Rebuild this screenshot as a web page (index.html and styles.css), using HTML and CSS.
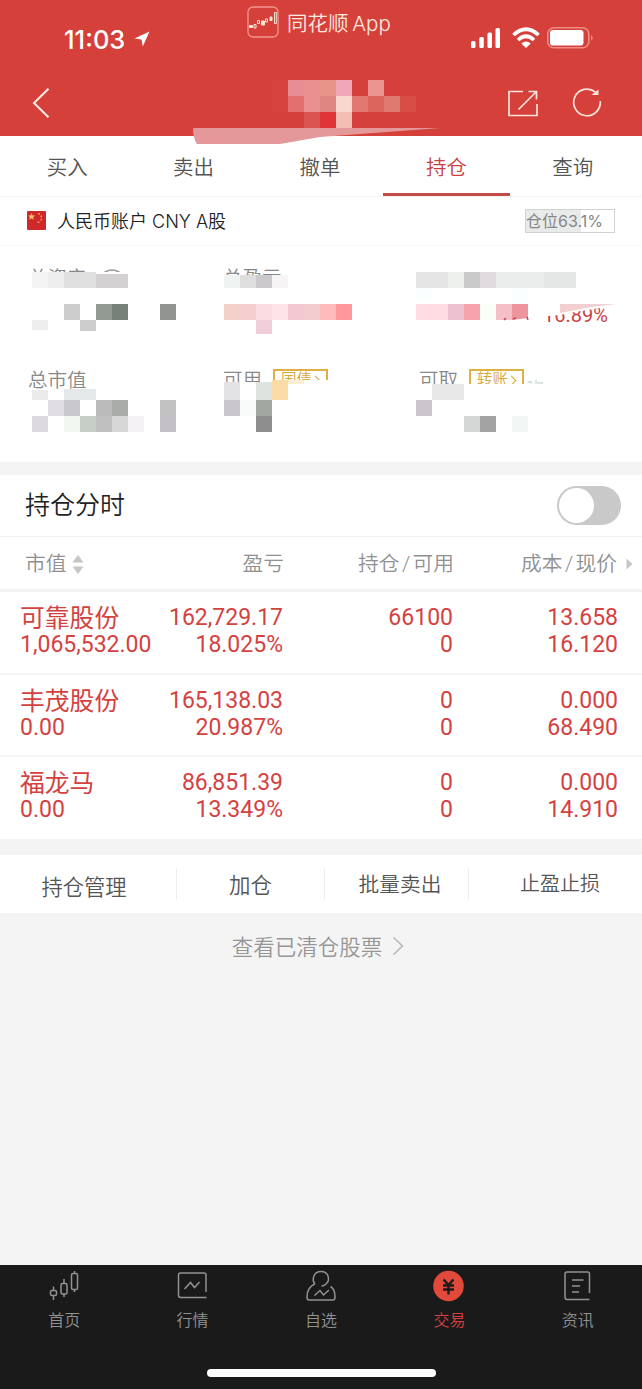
FILE: index.html
```
<!DOCTYPE html>
<html lang="zh-CN">
<head>
  <meta charset="UTF-8" />
  <title>持仓</title>
  <link rel="stylesheet" href="styles.css">
</head>
<body>
  <header class="header">
    <div class="status-bar">
      <div class="clock">11:03
        <svg width="16" height="16" viewBox="0 0 16 16"><path d="M15.5 0.5L0.5 7.5L7.5 8.5L8.8 15.5Z" fill="#fff"/></svg>
      </div>
      <div class="brand">
        <svg width="32" height="32" viewBox="0 0 32 32" fill="none" stroke="#ffe3d3">
          <rect x="1" y="1" width="30" height="30" rx="5" stroke="#f3968e" stroke-width="1.3"/>
          <path d="M2.5 19.500h3v2h-3zM14.500 15h3v4h-3zM23 11h2v3.500h-2z" fill="#ffe3d3"/>
          <path d="M7 18.500h2v3.500H7zM10.500 14.500h2v3h-2zM18.500 13h2v3h-2zM27.500 6.500h1.800v11h-1.800z"/>
        </svg>
        <span>同花顺 App</span>
      </div>
      <div class="signals">
        <svg width="30" height="22" viewBox="0 0 30 22" fill="#fff">
          <rect x="0" y="14" width="4.500" height="7" rx="1.500"/><rect x="8.300" y="10" width="4.500" height="11" rx="1.500"/>
          <rect x="16.500" y="5.500" width="4.500" height="15.500" rx="1.500"/><rect x="24.500" y="1" width="4.500" height="20" rx="1.500"/>
        </svg>
        <svg class="wifi" width="28" height="22" viewBox="0 0 28 22" fill="none" stroke="#fff" stroke-width="3.700">
          <path d="M1.500 8Q14 -3.500 26.500 8M6 13Q14 5.500 22 13"/><path d="M9.300 16.500Q14 12.500 18.700 16.500L14 21Z" fill="#fff" stroke="none"/>
        </svg>
        <svg class="battery" width="47" height="22" viewBox="0 0 47 22">
          <rect x="0.800" y="0.800" width="41" height="20" rx="6" fill="none" stroke="#f08b86" stroke-width="1.600"/>
          <rect x="3" y="3" width="33.500" height="15.500" rx="3" fill="#fff"/><path d="M44 8Q47.500 10.500 44 14Z" fill="#f08b86"/>
        </svg>
      </div>
    </div>
    <div class="title-bar">
      <svg class="back" width="18" height="30" viewBox="0 0 18 30" fill="none" stroke="#ffede6" stroke-width="2"><path d="M16.500 0.800L2 15L16.500 29.200"/></svg>
      <svg class="share" width="30" height="27" viewBox="0 0 30 27" fill="none" stroke="#ffe3d8" stroke-width="1.700"><path d="M15 1.500H1V25.500H29V14M10.500 19.500L28 2M20.500 1.500H28.500V9.500"/></svg>
      <svg width="30" height="30" viewBox="0 0 30 30" fill="none" stroke="#ffe3d8" stroke-width="1.700"><path d="M23.500 4.200A13.300 13.300 0 1 0 28.200 13"/><path d="M19.500 7H26.500V1.500Z" fill="#ffe3d8" stroke="none"/></svg>
    </div>
    <svg class="title-mask" width="250" height="66" viewBox="190 79 250 66">
      <path d="M282 81h2v2h-2zM289 80h14v1h-14z" fill="#ffd9cf"/>
      <g>
        <rect x="272" y="80" width="16" height="32" fill="#d6453d"/>
        <rect x="288" y="80" width="16" height="16" fill="#e88e92"/>
        <rect x="288" y="96" width="16" height="16" fill="#e1706f"/>
        <rect x="304" y="80" width="16" height="32" fill="#ea9090"/>
        <rect x="320" y="80" width="16" height="16" fill="#e79589"/>
        <rect x="320" y="96" width="16" height="16" fill="#df8580"/>
        <rect x="336" y="80" width="16" height="16" fill="#f2a7b8"/>
        <rect x="368" y="80" width="16" height="16" fill="#eb958e"/>
        <rect x="336" y="96" width="16" height="16" fill="#f8d7cf"/>
        <rect x="352" y="96" width="16" height="16" fill="#e17770"/>
        <rect x="368" y="96" width="16" height="16" fill="#dd655d"/>
        <rect x="384" y="96" width="16" height="16" fill="#df7a71"/>
        <rect x="400" y="96" width="16" height="16" fill="#d84d45"/>
        <rect x="304" y="112" width="16" height="16" fill="#dc5451"/>
        <rect x="320" y="112" width="16" height="16" fill="#df3538"/>
        <rect x="336" y="112" width="16" height="16" fill="#f2bdb3"/>
      </g>
      <path d="M193 128H440L400 131L320 137L280 144H197Q193 138 193 128Z" fill="#e5989a"/>
    </svg>
  </header>

  <nav class="tabs">
    <a>买入</a>
    <a>卖出</a>
    <a>撤单</a>
    <a class="active">持仓</a>
    <a>查询</a>
  </nav>

  <div class="account">
    <svg width="19" height="19" viewBox="0 0 19 19">
      <rect width="19" height="19" rx="1" fill="#cf282b"/>
      <path d="M4.500 2l1 2.500h2.600l-2 1.700.8 2.600-2.400-1.600-2.300 1.600.8-2.600-2-1.700h2.600z" fill="#ffc36b"/>
      <path d="M11 2h2v1.500h-2zM13.500 4.500h1.500v2h-1.500zM13.500 8h1.500v1.500h-1.500zM10.500 10.500h2v1.500h-2z" fill="#f2945b"/>
    </svg>
    <span class="account-name">人民币账户 CNY A股</span>
    <span class="position">仓位63.1%</span>
  </div>

  <section class="summary">
    <div class="cell">总资产
      <svg class="eye" width="30" height="18" viewBox="0 0 30 18" fill="none" stroke="#999" stroke-width="1.500"><path d="M1 9Q15 -7 29 9Q15 25 1 9Z"/><circle cx="15" cy="9" r="5.500"/></svg>
    </div>
    <div class="cell">总盈亏</div>
    <div class="cell percent">16.89%</div>
    <div class="cell">总市值</div>
    <div class="cell">可用 <span class="badge">国债<i></i></span></div>
    <div class="cell">可取 <span class="badge">转账<i></i></span></div>
    <svg class="mosaic" width="642" height="217" viewBox="0 245 642 217">
      <g fill="#fff">
        <rect x="26" y="272" width="110" height="20"/>
        <rect x="220" y="275" width="70" height="16"/>
        <path d="M535 300H620V305L600 308L575 312L560 315L535 317Z"/>
        <rect x="220" y="382" width="44" height="12"/>
        <rect x="264" y="380" width="70" height="14"/>
        <rect x="416" y="384" width="112" height="10"/>
      </g>
      <rect x="32" y="272" width="16" height="16" fill="#f4f4f4"/>
      <rect x="48" y="272" width="16" height="16" fill="#eee"/>
      <rect x="64" y="272" width="32" height="16" fill="#e1e0e1"/>
      <rect x="96" y="274" width="32" height="14" fill="#d3d1d2"/>
      <rect x="64" y="304" width="16" height="16" fill="#ccc"/>
      <rect x="96" y="304" width="16" height="16" fill="#929b93"/>
      <rect x="112" y="304" width="16" height="16" fill="#788178"/>
      <rect x="160" y="304" width="16" height="16" fill="#929492"/>
      <rect x="32" y="320" width="16" height="10" fill="#eee"/>
      <rect x="80" y="320" width="16" height="11" fill="#ccc"/>

      <rect x="224" y="275" width="16" height="13" fill="#eff4f3"/>
      <rect x="240" y="275" width="16" height="13" fill="#dedede"/>
      <rect x="256" y="275" width="16" height="13" fill="#cbc9cb"/>
      <rect x="272" y="275" width="16" height="13" fill="#f7f4f6"/>
      <rect x="224" y="304" width="16" height="16" fill="#f2d1cb"/>
      <rect x="240" y="304" width="16" height="16" fill="#f5cfd0"/>
      <rect x="256" y="304" width="16" height="16" fill="#fbdce1"/>
      <rect x="272" y="304" width="16" height="16" fill="#fde4e8"/>
      <rect x="288" y="304" width="16" height="16" fill="#f4c8d2"/>
      <rect x="304" y="304" width="16" height="16" fill="#f2cccf"/>
      <rect x="320" y="304" width="16" height="16" fill="#ffbaba"/>
      <rect x="336" y="304" width="16" height="16" fill="#ff989d"/>
      <rect x="256" y="320" width="16" height="14" fill="#f0ceda"/>

      <rect x="416" y="272" width="32" height="16" fill="#e5e5e5"/>
      <rect x="448" y="272" width="16" height="16" fill="#edf0ed"/>
      <rect x="464" y="272" width="16" height="16" fill="#cacaca"/>
      <rect x="480" y="272" width="16" height="16" fill="#dfdbde"/>
      <rect x="496" y="272" width="48" height="16" fill="#eaedec"/>
      <rect x="544" y="272" width="32" height="16" fill="#e4e7e6"/>
      <path d="M416 289h16v11h-16zM512 289h16v15h-16z" fill="#f9fefe"/>
      <rect x="416" y="304" width="32" height="16" fill="#ffdde3"/>
      <rect x="448" y="304" width="16" height="16" fill="#edc1cf"/>
      <rect x="464" y="304" width="16" height="16" fill="#f7a3ae"/>
      <rect x="480" y="304" width="16" height="16" fill="#fafff5"/>
      <rect x="496" y="304" width="16" height="16" fill="#f5bfc7"/>
      <path d="M512 304h16v14l-16 2z" fill="#ed949c"/>
      <path d="M560 304H616L592 307L576 310L560 313Z" fill="#f2d0d1"/>
      <path d="M504 320l2-2M513 319l3-1M527 317l1 3" stroke="#cf4246" stroke-width="1.500"/>

      <rect x="32" y="390" width="16" height="10" fill="#ebebec"/>
      <rect x="64" y="389" width="32" height="11" fill="#e5e8e8"/>
      <rect x="48" y="400" width="16" height="16" fill="#e0dee2"/>
      <rect x="64" y="400" width="16" height="16" fill="#c8c8ce"/>
      <rect x="96" y="400" width="16" height="16" fill="#bbb"/>
      <rect x="112" y="400" width="16" height="16" fill="#a9aca9"/>
      <rect x="160" y="400" width="16" height="16" fill="#c2c2c3"/>
      <rect x="32" y="416" width="16" height="16" fill="#dcdade"/>
      <rect x="64" y="416" width="16" height="16" fill="#f2f7f2"/>
      <rect x="80" y="416" width="16" height="16" fill="#c5cfc5"/>
      <rect x="96" y="416" width="16" height="16" fill="#c0c0c0"/>
      <rect x="112" y="416" width="16" height="16" fill="#d7d7d7"/>
      <rect x="128" y="416" width="16" height="16" fill="#f4f2f4"/>
      <rect x="160" y="416" width="16" height="16" fill="#c3c1c5"/>

      <rect x="224" y="382" width="16" height="18" fill="#e3e2e5"/>
      <rect x="256" y="382" width="16" height="18" fill="#dde4df"/>
      <rect x="272" y="380" width="16" height="20" fill="#fbdca5"/>
      <rect x="288" y="380" width="16" height="4" fill="#f8eed3"/>
      <rect x="224" y="400" width="16" height="16" fill="#c9c7cc"/>
      <rect x="240" y="400" width="16" height="16" fill="#f7faf8"/>
      <rect x="256" y="400" width="16" height="16" fill="#a0a8a1"/>
      <rect x="256" y="416" width="16" height="16" fill="#8e8e8e"/>

      <rect x="432" y="384" width="32" height="16" fill="#e8e8e8"/>
      <rect x="416" y="400" width="16" height="16" fill="#cac6cc"/>
      <rect x="464" y="416" width="16" height="16" fill="#d3d6d5"/>
      <rect x="480" y="416" width="16" height="16" fill="#a3a3a3"/>
      <rect x="512" y="416" width="16" height="16" fill="#f2f6f5"/>
      <path d="M527 383l1-2h4v2h3l1-5 1 4h6v2z" fill="#d8dfdd"/>
    </svg>
  </section>

  <div class="timeline">
    <span>持仓分时</span>
    <div class="toggle"></div>
  </div>

  <section class="holdings">
    <div class="row head">
      <div>市值<svg class="sort" width="12" height="19" viewBox="0 0 12 19" fill="#c6c6c6"><path d="M6 0L11.500 7.500H0.500ZM0.500 11.500H11.500L6 19Z"/></svg></div>
      <div>盈亏</div>
      <div>持仓<b>/</b>可用</div>
      <div>成本<b>/</b>现价<svg class="more" width="7" height="12" viewBox="0 0 7 12" fill="#c6c6c6"><path d="M0.500 0.500L6.500 6L0.500 11.500Z"/></svg></div>
    </div>
    <div class="row">
      <div><span class="name">可靠股份</span><span>1,065,532.00</span></div>
      <div><span>162,729.17</span><span>18.025%</span></div>
      <div><span>66100</span><span>0</span></div>
      <div><span>13.658</span><span>16.120</span></div>
    </div>
    <div class="row">
      <div><span class="name">丰茂股份</span><span>0.00</span></div>
      <div><span>165,138.03</span><span>20.987%</span></div>
      <div><span>0</span><span>0</span></div>
      <div><span>0.000</span><span>68.490</span></div>
    </div>
    <div class="row">
      <div><span class="name">福龙马</span><span>0.00</span></div>
      <div><span>86,851.39</span><span>13.349%</span></div>
      <div><span>0</span><span>0</span></div>
      <div><span>0.000</span><span>14.910</span></div>
    </div>
  </section>

  <div class="actions">
    <a class="manage">持仓管理</a>
    <a class="add">加仓</a>
    <a>批量卖出</a>
    <a class="stop">止盈止损</a>
  </div>

  <div class="closed">查看已清仓股票
    <svg width="12" height="20" viewBox="0 0 12 20" fill="none" stroke="#b5b5b5" stroke-width="1.500"><path d="M1.500 1.500L10.500 10L1.500 18.500"/></svg>
  </div>

  <footer class="bottom-nav">
    <a>
      <svg width="32" height="32" viewBox="0 0 32 32" fill="none" stroke="#929292" stroke-width="1.500"><rect x="2.500" y="20.500" width="6" height="5" rx="1.500"/><rect x="13" y="13.500" width="6" height="10.500" rx="1.500"/><rect x="23.500" y="3.500" width="6" height="16" rx="1.500"/><path d="M5.500 16.500v4M5.500 25.500v4.500M16 9v4.500M16 24v3M26.500 1v2.500M26.500 19.500v2.500"/></svg>
      首页
    </a>
    <a>
      <svg width="32" height="32" viewBox="0 0 32 32" fill="none" stroke="#929292" stroke-width="1.500"><path d="M29 22V5Q29 3 27 3H3.500Q1.500 3 1.500 5V25Q1.500 27.500 3.500 27.500H29.500M7.500 19L13.500 12.500L17.500 17.500L22.500 12"/></svg>
      行情
    </a>
    <a>
      <svg width="32" height="32" viewBox="0 0 32 32" fill="none" stroke="#929292" stroke-width="1.500"><path d="M10 14C7 11 7.500 1.500 16 1.500S25 11 21 14Q19 16 16.500 16M10 14Q2 17 2 27Q2 30 4 30H28Q30 30 30 27Q30 19 25.500 16.500M9.500 25.500L15 20.500L18.500 25L24 20"/></svg>
      自选
    </a>
    <a class="active">
      <svg width="32" height="32" viewBox="0 0 32 32"><circle cx="15.500" cy="16" r="15.300" fill="#e1493b"/><path d="M10.500 9.500L15.500 15L20.500 9.500M10 15.500H21M10 19.500H21M15.500 15V24.500" fill="none" stroke="#1b1b1b" stroke-width="2.400"/></svg>
      交易
    </a>
    <a>
      <svg width="32" height="32" viewBox="0 0 32 32" fill="none" stroke="#929292" stroke-width="1.500"><path d="M27.500 23V4Q27.500 2 25.500 2H5Q3 2 3 4V27Q3 29.500 5 29.500H27.500M10 10H21.500M10 16H18M10 22H17"/></svg>
      资讯
    </a>
    <div class="home-bar"></div>
  </footer>
</body>
</html>
```
FILE: styles.css
```
* {
  box-sizing: border-box;
}

body {
  margin: 0;
  width: 642px;
  height: 1389px;
  display: flex;
  flex-direction: column;
  background: #f4f4f4;
  color: #555;
  font-family: Inter, "Noto Sans CJK SC", sans-serif;
  font-size: 21px;
  font-weight: 350;
  overflow: hidden;
}

svg {
  display: block;
  flex: none;
}

.header {
  position: relative;
  height: 136px;
  background: #d5413a;
  color: #fff;
}

.status-bar {
  height: 70px;
  display: grid;
  grid-template-columns: 247px 224px 1fr;
}

.clock {
  display: flex;
  align-items: center;
  gap: 9px;
  padding: 8px 0 0 64px;
  font-size: 25.5px;
  font-weight: 500;
}

.brand {
  display: flex;
  align-items: center;
  gap: 8px;
  height: 44px;
  font-size: 20.5px;
  word-spacing: -2px;
  color: #ffe9e0;
  white-space: nowrap;
}

.signals {
  display: flex;
  align-items: center;
  padding-top: 6px;
}

.wifi {
  margin-left: 11px;
}

.battery {
  margin-left: 7px;
}

.title-bar {
  display: flex;
  align-items: center;
  height: 66px;
  padding: 0 40px 0 32px;
}

.share {
  margin-left: auto;
  margin-right: 34px;
}

.title-mask {
  position: absolute;
  left: 190px;
  top: 79px;
  z-index: 1;
}

.tabs {
  display: flex;
  height: 61px;
  padding: 0 6px 0 4px;
  background: #fff;
  border-bottom: 1px solid #f3f3f3;
}

.tabs a {
  flex: 1;
  text-align: center;
  line-height: 63px;
  font-size: 20.5px;
}

.tabs .active {
  color: #c8403f;
  border-bottom: 3px solid #c14b46;
}

.account {
  display: flex;
  align-items: center;
  height: 48px;
  padding: 0 27px 1px 27px;
  background: #fff;
  color: #222;
  font-size: 18px;
}

.account-name {
  margin-left: 11px;
  margin-top: -2px;
}

.position {
  margin-left: auto;
  width: 90px;
  height: 24px;
  line-height: 23px;
  border: 1px solid #cfd3d1;
  background: linear-gradient(90deg, #e9ebea 55px, #fff 55px);
  color: #858585;
  font-size: 16px;
  font-weight: 400;
  white-space: nowrap;
}

.summary {
  position: relative;
  height: 217px;
  display: grid;
  grid-template-columns: 195px 196px 1fr;
  grid-template-rows: 102px 1fr;
  padding: 19px 0 0 28px;
  background: #fff;
  border-top: 1px solid #f7f7f7;
  color: #888;
  font-size: 19.5px;
}

.cell {
  display: flex;
  align-items: flex-start;
  line-height: 26px;
}

.eye {
  margin: 4px 0 0 10px;
}

.percent {
  justify-content: flex-end;
  padding: 37px 34px 0 0;
  color: #c94346;
  font-size: 20px;
  font-family: Roboto, sans-serif;
  font-weight: 400;
}

.badge {
  display: flex;
  align-items: center;
  width: 55px;
  height: 22px;
  margin: 2px 0 0 11px;
  padding-left: 6px;
  border: 2px solid #dfb044;
  color: #d7a638;
  font-size: 15.5px;
}

.badge i {
  width: 7px;
  height: 7px;
  border-top: 1px solid #d7a638;
  border-right: 1px solid #d7a638;
  transform: rotate(45deg);
}

.mosaic {
  position: absolute;
  left: 0;
  top: -1px;
}

.timeline {
  display: flex;
  align-items: center;
  justify-content: space-between;
  height: 61px;
  margin-top: 13px;
  padding: 0 21px 0 25px;
  background: #fff;
  color: #222;
  font-size: 25px;
}

.timeline span {
  margin-top: -5px;
}

.toggle {
  width: 64px;
  height: 39px;
  padding: 2px;
  border-radius: 20px;
  background: #c9c9c9;
}

.toggle::before {
  content: "";
  display: block;
  width: 35px;
  height: 35px;
  border-radius: 50%;
  background: #fff;
}

.holdings {
  background: #fff;
}

.row {
  display: grid;
  grid-template-columns: 133px 130px 170px 165px;
  height: 82.500px;
  padding: 12px 0 0 20px;
  border-bottom: 2px solid #f5f5f5;
  color: #d4423f;
  font-family: Roboto, "Noto Sans CJK SC", sans-serif;
  font-size: 23px;
  font-weight: 400;
  line-height: 27px;
}

.row div {
  display: flex;
  flex-direction: column;
  align-items: flex-end;
}

.row div:first-child {
  align-items: flex-start;
}

.row:last-child {
  height: 81.500px;
  border-bottom: 0;
}

.name {
  margin-bottom: -2px;
  font-size: 24.800px;
  line-height: 29px;
}

.row.head {
  height: 56px;
  padding: 0 0 0 25px;
  grid-template-columns: 128px 131px 170px 179px;
  border-top: 1px solid #f1f1f1;
  border-bottom: 3px solid #f3f3f3;
  color: #909090;
  font-size: 20.700px;
  font-weight: 350;
}

.row.head div {
  flex-direction: row;
  align-items: center;
  justify-content: flex-end;
  padding-top: 2px;
}

.row.head div:first-child {
  justify-content: flex-start;
}

.head b {
  margin: 0 2.500px;
  font-weight: 350;
}

.sort {
  margin-left: 6px;
}

.more {
  margin-left: 9px;
}

.actions {
  display: grid;
  grid-template-columns: 177px 148px 144px 1fr;
  align-items: center;
  height: 58px;
  margin-top: 16px;
  background: #fff;
}

.actions a {
  height: 30px;
  line-height: 32px;
  padding-left: 7px;
  text-align: center;
  border-right: 1px solid #ececec;
  font-size: 20.700px;
}

.actions .manage {
  padding: 2px 0 0 0;
  margin-left: -8px;
  font-size: 21.300px;
}

.actions .add {
  padding-left: 0;
  font-size: 21.500px;
}

.actions .stop {
  padding-left: 9px;
  border-right: 0;
  font-size: 20px;
  line-height: 30px;
}

.closed {
  display: flex;
  align-items: center;
  justify-content: center;
  gap: 10px;
  height: 66px;
  padding-right: 6px;
  color: #969696;
  font-size: 21.500px;
}

.bottom-nav {
  position: relative;
  display: flex;
  height: 124px;
  margin-top: auto;
  padding-top: 5px;
  background: #1a1a1a;
}

.bottom-nav a {
  flex: 1;
  display: flex;
  flex-direction: column;
  align-items: center;
  gap: 6px;
  color: #929292;
  font-size: 16px;
  line-height: 24px;
}

.bottom-nav .active {
  color: #d6403f;
}

.home-bar {
  position: absolute;
  left: 207px;
  bottom: 12px;
  width: 229px;
  height: 8px;
  border-radius: 4px;
  background: #fff;
}
```
